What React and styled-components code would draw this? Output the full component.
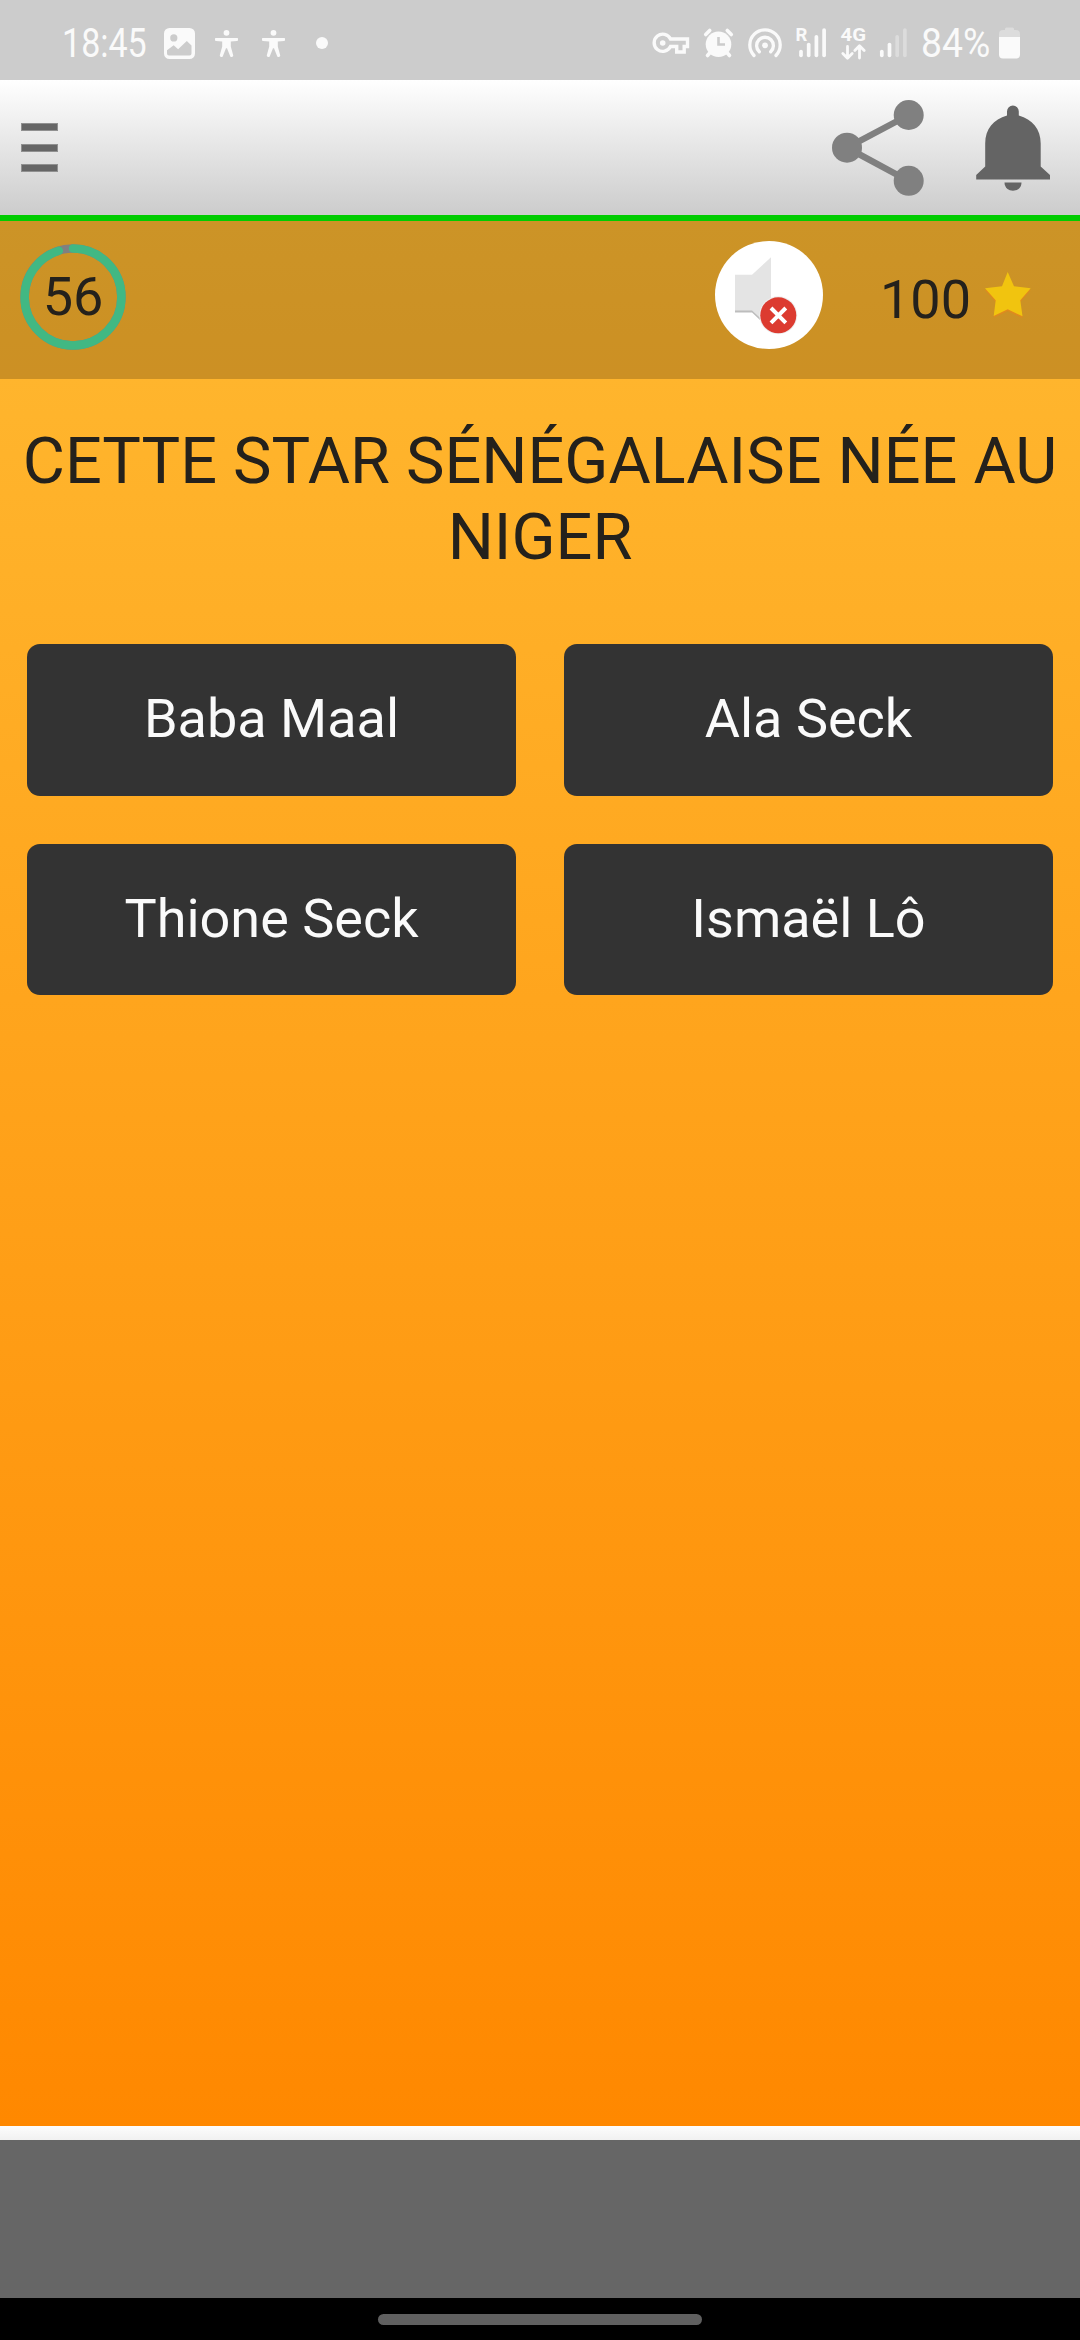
import styled, { createGlobalStyle } from 'styled-components';

const answers = [
   { id: 1, name: 'Baba Maal' },
   { id: 2, name: 'Ala Seck' },
   { id: 3, name: 'Thione Seck' },
   { id: 4, name: 'Ismaël Lô' },
];

const RING_RADIUS = 48.4;
const RING_LENGTH = 2 * Math.PI * RING_RADIUS;

// Status bar glyphs share the bar's own coordinates, x is the left edge of the glyph
const Glyph = ({ x, width, gap = 0, children }) => (
   <GlyphSvg
      $gap={gap}
      width={width}
      height='80'
      viewBox={`${x} 0 ${width} 80`}
      fill='currentColor'
   >
      {children}
   </GlyphSvg>
);

const Person = ({ gap }) => (
   <Glyph x={215} width={23} gap={gap}>
      <circle cx='226.5' cy='32.8' r='2.9' />
      <path d='M216 38h21a1.4 1.4 0 0 1 0 2.9l-6.2.6v5l2.4 8.7a1.6 1.6 0 0 1-3 1l-3.2-8h-1l-3.2 8a1.6 1.6 0 0 1-3-1l2.4-8.7v-5l-6.2-.6a1.4 1.4 0 0 1 0-2.9z' />
   </Glyph>
);

const SignalBars = ({ x, faded = 0 }) => (
   <g stroke='currentColor' strokeWidth='3.7' strokeLinecap='round'>
      {[51.5, 44.5, 36.8, 30].map((top, i) => (
         <path
            key={top}
            d={`M${x + i * 7.7} ${top}V55.3`}
            opacity={i > 3 - faded ? 0.35 : 1}
         />
      ))}
   </g>
);

const StatusBar = () => (
   <StatusWrap>
      <StatusGroup>
         <StatusText $width={84} $scale={0.83}>
            18:45
         </StatusText>
         <Glyph x={164} width={31} gap={18}>
            <path
               fillRule='evenodd'
               d='M169.5 28h20a5.5 5.5 0 0 1 5.5 5.5v20a5.5 5.5 0 0 1-5.5 5.5h-20a5.5 5.5 0 0 1-5.5-5.5v-20a5.5 5.5 0 0 1 5.5-5.5zM173.8 34.3a3.6 3.6 0 1 0 0 7.2a3.6 3.6 0 0 0 0-7.2zM167 50.3v3.2q0 2 2 2h20.5q2 0 2-2v-8l-4.7-4.5-8.7 8.2-4.4-4z'
            />
         </Glyph>
         <Person gap={20} />
         <Person gap={24} />
         <Glyph x={316} width={12} gap={31}>
            <circle cx='322' cy='43' r='6' />
         </Glyph>
      </StatusGroup>

      <StatusGroup>
         <Glyph x={652} width={38}>
            <g fill='none' stroke='currentColor' strokeWidth='3.4'>
               <path d='M670.5 39H687.5V46.5H684.2V52H676.7V46.5H670.5A8.6 8.6 0 1 1 670.5 39z' />
            </g>
            <circle cx='662.7' cy='43' r='2.8' />
         </Glyph>
         <Glyph x={703} width={31} gap={13}>
            <circle cx='718.5' cy='44.3' r='12.8' />
            <path
               d='M705.7 34.5l4-4M731.3 34.5l-4-4M710.5 52l-3 3.5M726.5 52l3 3.5'
               stroke='currentColor'
               strokeWidth='3.6'
               strokeLinecap='round'
            />
            <path d='M718.5 37v7.5h6.5' fill='none' stroke='#cccccc' strokeWidth='2.6' />
         </Glyph>
         <Glyph x={747} width={36} gap={13}>
            <circle cx='765' cy='45.3' r='2.9' />
            <path
               d='M754 55.5A15.2 15.2 0 1 1 776 55.5M759.3 51.8A8.4 8.4 0 1 1 770.7 51.8'
               fill='none'
               stroke='currentColor'
               strokeWidth='3.3'
               strokeLinecap='round'
            />
         </Glyph>
         <Glyph x={796} width={31} gap={13}>
            <GlyphText x='795.5' y='41'>
               R
            </GlyphText>
            <SignalBars x={801} />
         </Glyph>
         <Glyph x={840} width={27} gap={13}>
            <GlyphText x='840.5' y='41' textLength='25.5' lengthAdjust='spacingAndGlyphs'>
               4G
            </GlyphText>
            <path
               d='M847.5 46.5v11M842.8 53.5l4.7 4.7 4.7-4.7M859.5 58v-11M854.8 50.5l4.7-4.7 4.7 4.7'
               fill='none'
               stroke='currentColor'
               strokeWidth='2.8'
               strokeLinecap='round'
               strokeLinejoin='round'
            />
         </Glyph>
         <Glyph x={879} width={30} gap={12}>
            <SignalBars x={881.8} faded={2} />
         </Glyph>
         <StatusText $width={68} $gap={12} $scale={0.91}>
            84%
         </StatusText>
         <Glyph x={999} width={21} gap={10}>
            <path
               opacity='.35'
               d='M1005 30v-1q0-1.5 1.5-1.5h6q1.5 0 1.5 1.5v1h2q4 0 4 4v3h-21v-3q0-4 4-4z'
            />
            <path d='M999 37h21v17.5q0 4-4 4h-13q-4 0-4-4z' />
         </Glyph>
      </StatusGroup>
   </StatusWrap>
);

const Header = () => (
   <HeaderWrap>
      <MenuButton aria-label='Menu'>
         <span />
         <span />
         <span />
      </MenuButton>
      <HeaderActions>
         <svg width='94' height='98' viewBox='831 98 94 98' fill='#808080'>
            <path d='M908.7 114L847 146.7L908.7 180' fill='none' stroke='#808080' strokeWidth='6.5' />
            <circle cx='908.7' cy='114' r='15' />
            <circle cx='847' cy='146.7' r='15' />
            <circle cx='908.7' cy='179.8' r='15' />
         </svg>
         <svg width='76' height='98' viewBox='974.5 98 76 98' fill='#646464'>
            <path d='M1006.5 114.5V110.5a5.9 5.9 0 0 1 11.8 0v4c13.5 4 21.9 13.5 21.9 28v23l9.3 8.5v4.5h-73.8v-4.5l9-8.5v-23c0-14.500 8.300-24 21.800-28z' />
            <path d='M1004 181.5h17c0 11-17 11-17 0z' />
         </svg>
      </HeaderActions>
   </HeaderWrap>
);

const Countdown = ({ seconds, progress }) => (
   <CountdownWrap>
      <svg width='106' height='106' viewBox='-53 -53 106 106' fill='none' strokeWidth='8.5'>
         <circle r={RING_RADIUS} stroke='#808080' />
         <circle
            r={RING_RADIUS}
            stroke='#41b883'
            strokeLinecap='round'
            strokeDasharray={`${RING_LENGTH * progress} ${RING_LENGTH}`}
            transform='rotate(-90)'
         />
      </svg>
      <span>{seconds}</span>
   </CountdownWrap>
);

const MuteButton = () => (
   <MuteWrap aria-label='Son'>
      <svg width='108' height='108' viewBox='0 0 108 108'>
         <path d='M20 36h17l19-17.4V89.5L37 71.5H20z' fill='#bdbdbd' />
         <path d='M20 33.8h17L56 16.3V87L37 69.4H20z' fill='#e4e4e4' />
         <circle cx='63.3' cy='74.3' r='19' fill='#eeeeee' />
         <circle cx='63.3' cy='74.3' r='18' fill='#dc3b30' />
         <path d='M56 67l14.8 14.8M70.8 67L56 81.8' stroke='#ffffff' strokeWidth='4' />
      </svg>
   </MuteWrap>
);

const starPoints =
   '22.7,0 29,14.3 45.7,16.3 35.3,28.3 37.5,44.3 22.7,37.3 8.7,44 10.7,28.3 0,16.3 17,14.3';

const QuizBar = () => (
   <QuizBarWrap>
      <Countdown seconds={56} progress={0.951} />
      <Score>
         <MuteButton />
         <span>100</span>
         <svg width='46' height='48' viewBox='0 0 46 48'>
            <polygon points={starPoints} fill='#e08a1e' transform='translate(0 1.8)' />
            <polygon points={starPoints} fill='#f1c40f' />
         </svg>
      </Score>
   </QuizBarWrap>
);

export default function App() {
   return (
      <Page>
         <GlobalStyle />
         <StatusBar />
         <Header />
         <Quiz>
            <QuizBar />
            <Question>CETTE STAR SÉNÉGALAISE NÉE AU NIGER</Question>
            <AnswersGrid>
               {answers.map((answer) => (
                  <Answer key={answer.id}>{answer.name}</Answer>
               ))}
            </AnswersGrid>
         </Quiz>
         <Divider />
         <AdSlot />
         <NavBar>
            <NavHandle />
         </NavBar>
      </Page>
   );
}

const GlobalStyle = createGlobalStyle`
   * {
      box-sizing: border-box;
   }

   body {
      margin: 0;
      font-family: Roboto, sans-serif;
      color: #24211c;
   }

   button {
      border: 0;
      padding: 0;
      font: inherit;
   }

   svg {
      display: block;
   }
`;

const Page = styled.div`
   display: flex;
   flex-direction: column;
   width: 1080px;
   height: 2340px;
   overflow: hidden;
`;

const StatusWrap = styled.div`
   display: flex;
   justify-content: space-between;
   height: 80px;
   padding: 0 60px 0 62px;
   background: #cccccc;
   color: #fafafa;
`;

const StatusGroup = styled.div`
   display: flex;
   align-items: center;
`;

const GlyphSvg = styled.svg`
   flex: none;
   margin-left: ${({ $gap }) => $gap}px;
`;

const GlyphText = styled.text`
   font: 700 18.5px Roboto, sans-serif;
`;

const StatusText = styled.span`
   width: ${({ $width }) => $width}px;
   margin-left: ${({ $gap = 0 }) => $gap}px;
   padding-top: 7px;
   font-size: 41px;
   line-height: 73px;
   white-space: nowrap;
   transform: scaleX(${({ $scale }) => $scale});
   transform-origin: left;
`;

const HeaderWrap = styled.header`
   display: flex;
   align-items: center;
   justify-content: space-between;
   height: 141px;
   padding: 0 29px 0 21px;
   border-bottom: 6px solid #00cc00;
   background: linear-gradient(#ffffff, #cccccc) padding-box;
`;

const MenuButton = styled.button`
   display: flex;
   flex-direction: column;
   gap: 12.5px;
   background: none;

   span {
      width: 37px;
      height: 8px;
      border: 1px solid #909090;
      background: #666666;
   }
`;

const HeaderActions = styled.div`
   display: flex;
   gap: 50px;
`;

const Quiz = styled.main`
   height: 1905px;
   background: linear-gradient(#ffb931, #ff8800);
`;

const QuizBarWrap = styled.div`
   display: flex;
   justify-content: space-between;
   height: 158px;
   padding: 20px 49px 0 20px;
   background: rgba(0, 0, 0, 0.2);
   font-size: 54px;
   line-height: 64px;
`;

const CountdownWrap = styled.div`
   display: grid;
   place-items: center;
   width: 106px;
   height: 106px;
   margin-top: 3px;

   > * {
      grid-area: 1 / 1;
   }
`;

const Score = styled.div`
   display: flex;
   align-items: flex-start;

   > span {
      width: 91px;
      margin: 27px 14px 0 57px;
   }

   > svg {
      margin-top: 31px;
   }
`;

const MuteWrap = styled.button`
   width: 108px;
   height: 108px;
   border-radius: 50%;
   background: #ffffff;
`;

const Question = styled.h1`
   margin: 0 0 69px;
   padding: 44px 20px 0;
   font-size: 64.8px;
   font-weight: 400;
   line-height: 76px;
   text-align: center;
`;

const AnswersGrid = styled.div`
   display: grid;
   grid-template-columns: repeat(2, 1fr);
   grid-template-rows: 152px 151px;
   gap: 48px;
   padding: 0 27px;
`;

const Answer = styled.button`
   padding-bottom: 3px;
   border-radius: 13px;
   background: #333333;
   color: #fafafa;
   font-size: 54px;
`;

const Divider = styled.div`
   height: 14px;
   background: linear-gradient(#fdfdfd, #f1f1f1);
`;

const AdSlot = styled.div`
   height: 158px;
   background: #666666;
`;

const NavBar = styled.nav`
   display: flex;
   align-items: center;
   justify-content: center;
   height: 42px;
   background: #000000;
`;

const NavHandle = styled.div`
   width: 324px;
   height: 11px;
   margin-top: 1px;
   border-radius: 6px;
   background: #606060;
`;
